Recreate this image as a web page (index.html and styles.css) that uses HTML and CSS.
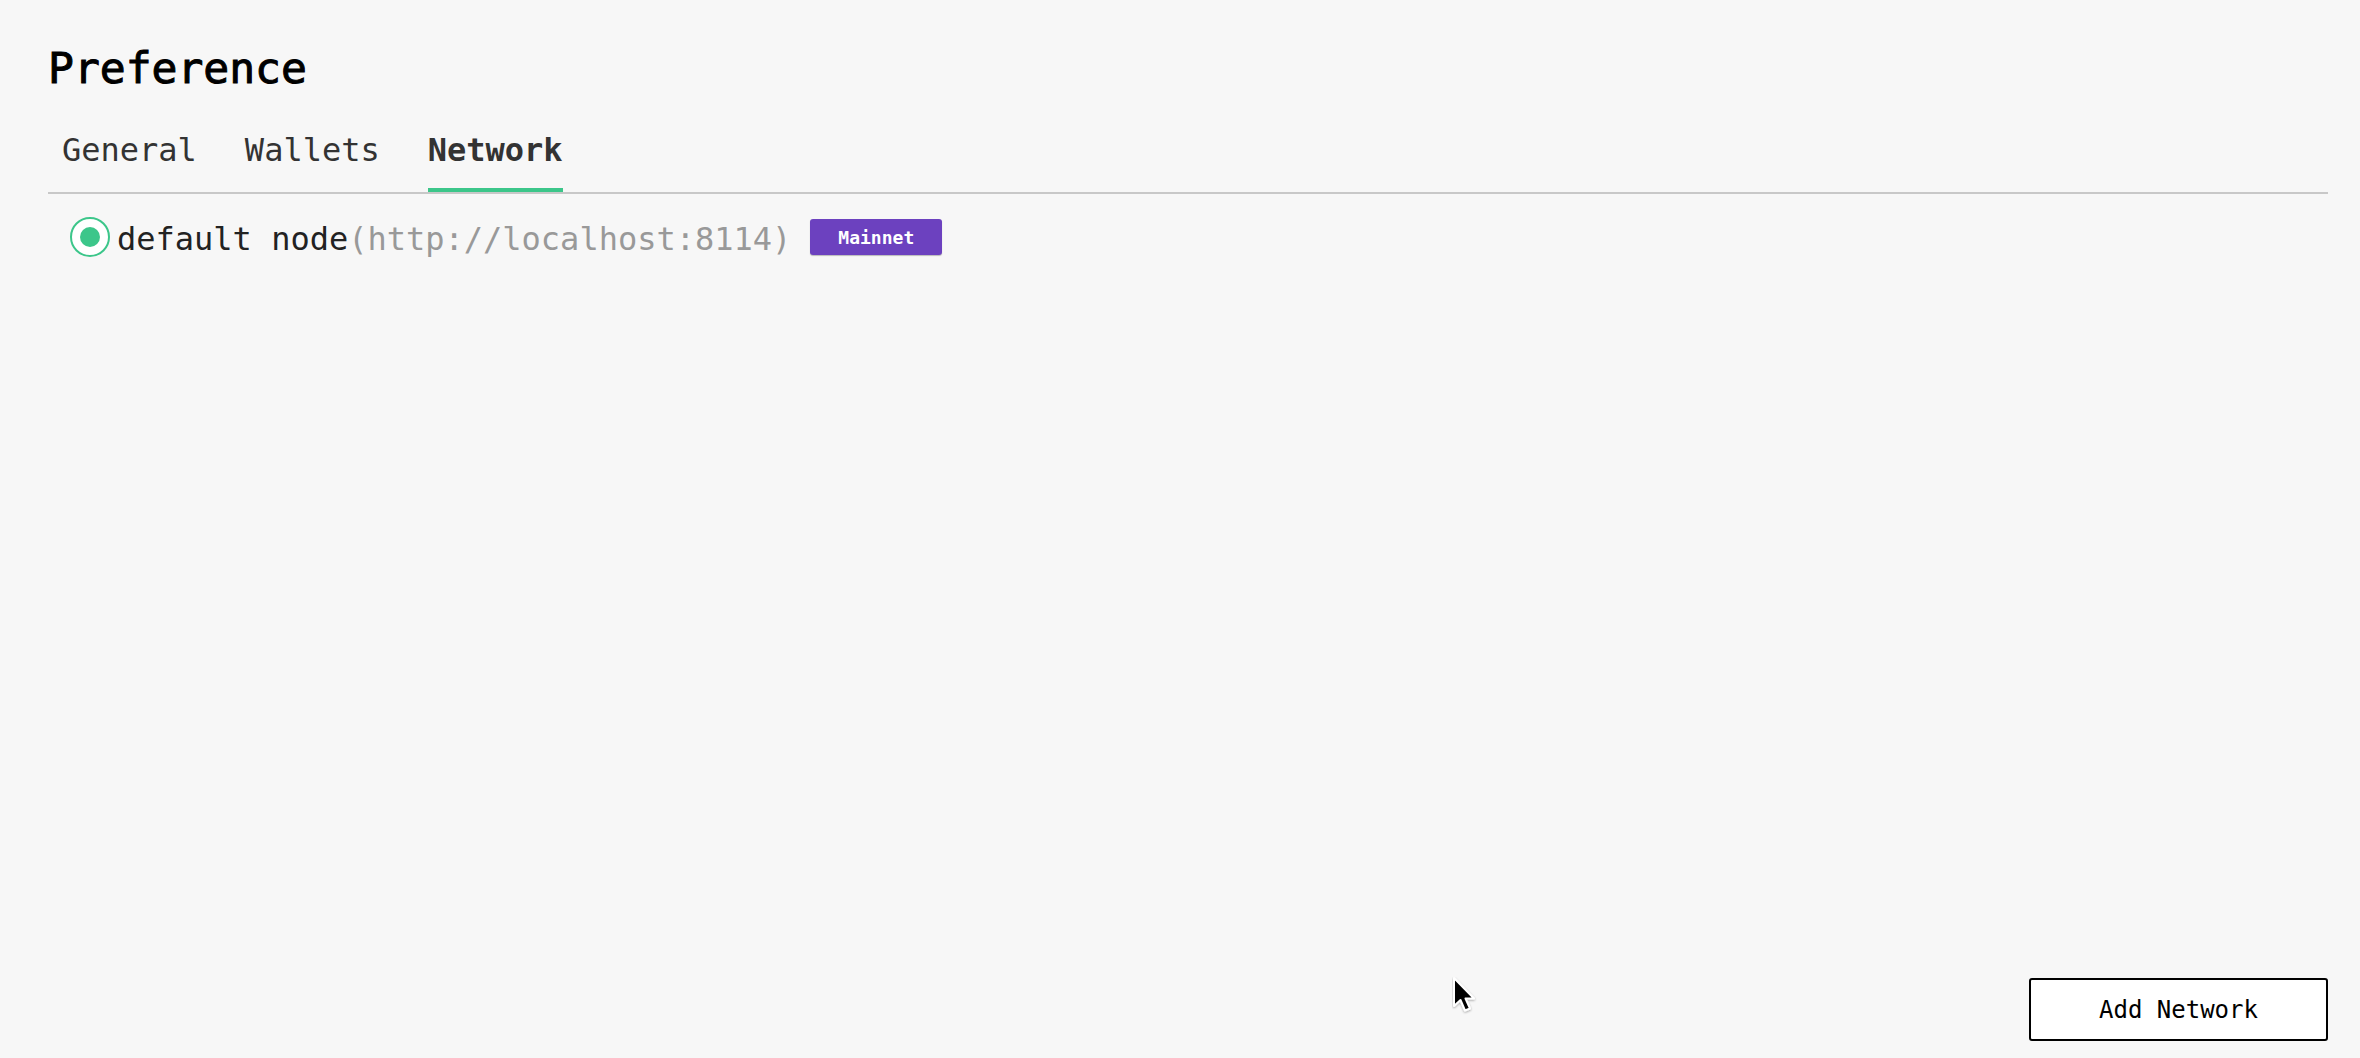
FILE: index.html
```html
<!DOCTYPE html>
<html lang="en">
  <head>
    <meta charset="UTF-8" />
    <meta name="viewport" content="width=device-width, initial-scale=1.0" />
    <title>Preference</title>
    <link rel="stylesheet" href="styles.css">
  </head>
  <body>
    <div class="page">
      <h1 class="title">Preference</h1>
      <div class="tabs">
        <span class="tab">General</span>
        <span class="tab">Wallets</span>
        <span class="tab active">Network</span>
      </div>
      <div class="network-list">
        <div class="network-item">
          <span class="radio checked"><span class="dot"></span></span>
          <span class="node-name">default node</span>
          <span class="node-url">(http://localhost:8114)</span>
          <span class="chain-tag">Mainnet</span>
        </div>
      </div>
      <div class="footer">
        <button type="button" class="add-btn">Add Network</button>
      </div>
    </div>
    <svg class="cursor" width="28" height="40" viewBox="0 0 28 40">
      <defs>
        <filter id="sh" x="-30%" y="-30%" width="160%" height="160%">
          <feDropShadow dx="0" dy="1" stdDeviation="1" flood-opacity="0.35" />
        </filter>
      </defs>
      <path d="M2 1 L2 29 L8.5 23 L13 33.5 L18 31.5 L13.5 21.5 L22 21.5 Z" fill="#000" stroke="#fff" stroke-width="2" stroke-linejoin="round" filter="url(#sh)" />
    </svg>
  </body>
</html>
```

FILE: styles.css
```css
* {
  box-sizing: border-box;
  margin: 0;
  padding: 0;
}
html,
body {
  height: 100%;
}
body {
  background-color: #f7f7f7;
  font-family: "DejaVu Sans Mono", "Liberation Mono", monospace;
  color: #333;
  overflow: hidden;
}
.page {
  display: flex;
  flex-direction: column;
  height: 100vh;
  padding: 43px 32px 17px 48px;
}
.title {
  font-size: 43px;
  line-height: 50px;
  font-weight: normal;
  color: #000;
  -webkit-text-stroke: 1px #000;
  margin-bottom: 39px;
}
.tabs {
  display: flex;
  gap: 48px;
  padding-left: 14px;
  border-bottom: 2px solid #c8c8c8;
}
.tab {
  font-size: 32px;
  line-height: 37px;
  padding-bottom: 19px;
  border-bottom: 4px solid transparent;
  color: #333;
}
.tab.active {
  font-weight: bold;
  border-bottom-color: #3cc68a;
}
.network-list {
  padding-top: 23px;
  padding-left: 22px;
}
.network-item {
  display: flex;
  align-items: center;
  height: 40px;
}
.radio {
  display: flex;
  justify-content: center;
  align-items: center;
  width: 40px;
  height: 40px;
  border: 2px solid #3cc68a;
  border-radius: 50%;
  background-color: #fff;
  margin-right: 7px;
}
.radio .dot {
  width: 20px;
  height: 20px;
  border-radius: 50%;
  background-color: #3cc68a;
}
.node-name,
.node-url {
  font-size: 32px;
  line-height: 37px;
  padding-top: 5px;
}
.node-name {
  color: #222;
}
.node-url {
  color: #999;
}
.chain-tag {
  display: flex;
  justify-content: center;
  align-items: center;
  width: 132px;
  height: 36px;
  margin-left: 19px;
  background-color: #6c41bf;
  border-radius: 3px;
  box-shadow: 0 1px 1px rgba(0, 0, 0, 0.25);
  color: #fff;
  font-size: 18px;
  font-weight: bold;
}
.footer {
  margin-top: auto;
  display: flex;
  justify-content: flex-end;
}
.add-btn {
  width: 299px;
  height: 63px;
  background-color: #fff;
  border: 2px solid #000;
  border-radius: 3px;
  font-family: "DejaVu Sans Mono", "Liberation Mono", monospace;
  font-size: 24px;
  color: #000;
  cursor: pointer;
}
.cursor {
  position: absolute;
  left: 1452px;
  top: 977px;
}
```
